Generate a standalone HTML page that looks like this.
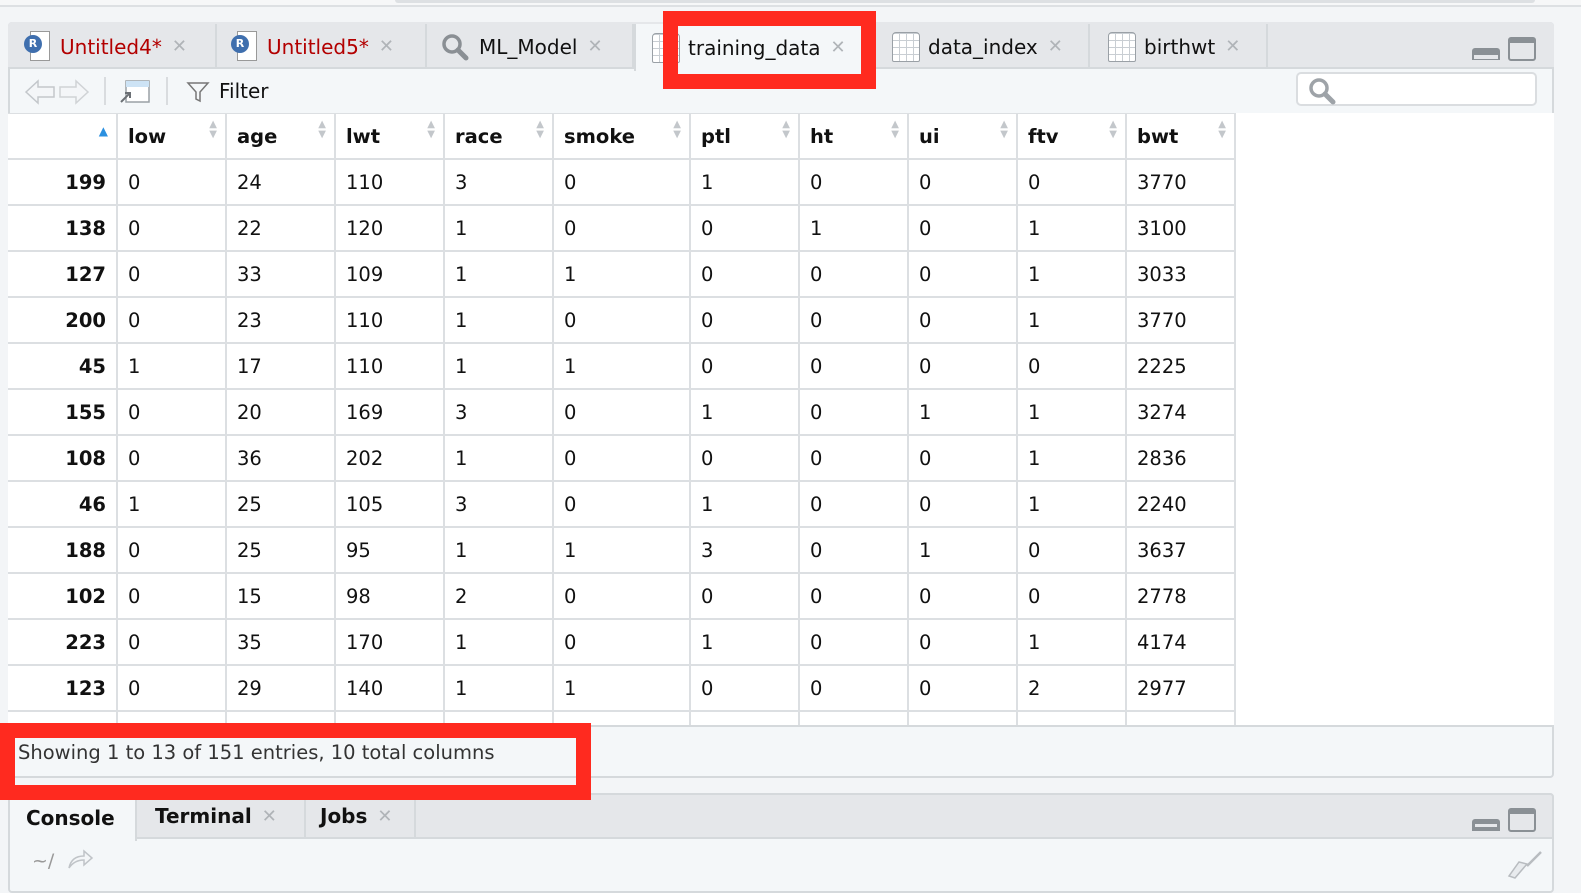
<!DOCTYPE html>
<html><head><meta charset="utf-8"><style>
*{box-sizing:border-box;margin:0;padding:0}
body{width:1581px;height:881px;overflow:hidden;background:#f3f5f7;font-family:"DejaVu Sans","Liberation Sans",sans-serif;position:relative;color:#111}
.abs{position:absolute}
.pane{left:8px;top:22px;width:1546px;height:756px;border:2px solid #d5d9dc;border-radius:4px;background:#f4f7f9}
.tabbar{left:8px;top:22px;width:1546px;height:47px;background:#e5e7ea;border-bottom:2px solid #d5d9dc;border-radius:4px 4px 0 0}
.tab{top:24px;height:45px;border-right:2px solid #d5d9dc;font-size:20px;display:flex;align-items:center;padding-left:14px;white-space:nowrap}
.x{color:#b0b4b8;font-size:18px;margin-left:10px;font-weight:bold}
.red{color:#b30000}
.grid{width:28px;height:30px;border:1.5px solid #9aa0a6;border-radius:4px 4px 2px 2px;background:repeating-linear-gradient(90deg,transparent 0 6px,#c9ced3 6px 7px),repeating-linear-gradient(0deg,#fff 0 6px,#c9ced3 6px 7px);margin-right:8px}
.rdoc{width:26px;height:32px;position:relative;margin-right:10px}
.rdoc .pg{position:absolute;left:6px;top:0;width:20px;height:30px;border:1.5px solid #999;background:#fff}
.rdoc .c{position:absolute;left:0;top:4px;width:18px;height:18px;border-radius:50%;background:#3f6fae;color:#fff;font-size:11px;font-weight:bold;text-align:center;line-height:18px}
table{border-collapse:collapse;font-size:19.5px;table-layout:fixed}
td,th{border:2px solid #dcdfe2;height:46px;padding:0 10px;text-align:left;white-space:nowrap;overflow:hidden}
th{font-weight:bold;position:relative;background:#fff}
td{background:#fff}
td.n{text-align:right;font-weight:bold;background:#fff}
th .s{position:absolute;right:8px;top:6px;color:#c3c7cb;font-size:10px;line-height:10px}
.rb{border:15px solid #ff2a1f}
</style></head><body>
<div class="abs" style="left:0;top:0;width:1581px;height:7px;background:#f6f7f8;border-bottom:2px solid #dde0e3"></div>
<div class="abs" style="left:395px;top:0;width:1140px;height:3px;background:#dde0e3;border-radius:0 0 3px 3px"></div>
<div class="abs pane"></div>
<div class="abs tabbar"></div>
<div class="abs tab" style="left:10px;width:207px"><div class="rdoc"><div class="pg"></div><div class="c">R</div></div><span class="red">Untitled4*</span><span class="x">✕</span></div>
<div class="abs tab" style="left:217px;width:210px"><div class="rdoc"><div class="pg"></div><div class="c">R</div></div><span class="red">Untitled5*</span><span class="x">✕</span></div>
<div class="abs tab" style="left:427px;width:207px"><svg width="28" height="28" viewBox="0 0 28 28" style="margin-right:10px"><circle cx="11" cy="11" r="8" fill="none" stroke="#8a8f94" stroke-width="3.5"/><path d="M17 17l8 8" stroke="#8a8f94" stroke-width="5" stroke-linecap="round"/></svg>ML_Model<span class="x">✕</span></div>
<div class="abs tab" style="left:634px;width:232px;background:#f4f7f9;height:47px;border-left:2px solid #d5d9dc;padding-left:16px"><div class="grid"></div>training_data<span class="x">✕</span></div>
<div class="abs tab" style="left:878px;width:212px;padding-left:14px"><div class="grid"></div>data_index<span class="x">✕</span></div>
<div class="abs tab" style="left:1090px;width:178px;padding-left:18px"><div class="grid"></div>birthwt<span class="x">✕</span></div>
<div class="abs" style="left:1472px;top:48px;width:28px;height:12px;background:#8a9095;border-radius:3px 3px 0 0;border:2px solid #8a9095;border-bottom:0"><div style="background:#e5e7ea;height:4px;margin-top:5px"></div></div>
<div class="abs" style="left:1508px;top:37px;width:28px;height:24px;border:2.5px solid #8a9095;border-top:6px solid #8a9095;border-radius:3px"></div>
<svg class="abs" style="left:24px;top:78px" width="70" height="28"><path d="M2 14 L14 3 V9 H30 V19 H14 V25Z" fill="#f4f6f8" stroke="#c3c7cb" stroke-width="1.5"/><path d="M64 14 L52 3 V9 H36 V19 H52 V25Z" fill="#f4f6f8" stroke="#d0d3d6" stroke-width="1.5"/></svg>
<div class="abs" style="left:104px;top:77px;width:2px;height:28px;background:#d9dcdf"></div>
<svg class="abs" style="left:118px;top:78px" width="34" height="28"><rect x="8" y="3" width="23" height="21" fill="#fff" stroke="#9aa0a6" stroke-width="1.5"/><rect x="8" y="3" width="23" height="6" fill="#cde3f5"/><path d="M3 24 L12 15 M7 15 H12 V20" stroke="#6b7075" stroke-width="2" fill="none"/></svg>
<div class="abs" style="left:166px;top:77px;width:2px;height:28px;background:#d9dcdf"></div>
<svg class="abs" style="left:186px;top:80px" width="24" height="24"><path d="M2 3 H22 L14 12 V21 L10 19 V12Z" fill="none" stroke="#777" stroke-width="1.5"/></svg>
<div class="abs" style="left:219px;top:79px;font-size:20px">Filter</div>
<div class="abs" style="left:1296px;top:72px;width:241px;height:34px;background:#fff;border:2px solid #dadde0;border-radius:5px"></div>
<svg class="abs" style="left:1308px;top:77px" width="30" height="28"><circle cx="11" cy="11" r="8" fill="none" stroke="#9ea3a8" stroke-width="3.5"/><path d="M17 17l8 8" stroke="#9ea3a8" stroke-width="5" stroke-linecap="round"/></svg>
<div class="abs" style="left:8px;top:113px;width:1546px;height:614px;background:#fff;overflow:hidden;border-bottom:2px solid #d5d9dc">
<table style="margin-left:-2px;margin-top:-1px;width:1228px">
<colgroup><col style="width:110px"><col style="width:109px"><col style="width:109px"><col style="width:109px"><col style="width:109px"><col style="width:137px"><col style="width:109px"><col style="width:109px"><col style="width:109px"><col style="width:109px"><col style="width:109px"></colgroup>
<tr><th><span style="position:absolute;right:8px;top:10px;color:#2b90e0;font-size:12px">▲</span></th><th>low<span class="s">▲<br>▼</span></th><th>age<span class="s">▲<br>▼</span></th><th>lwt<span class="s">▲<br>▼</span></th><th>race<span class="s">▲<br>▼</span></th><th>smoke<span class="s">▲<br>▼</span></th><th>ptl<span class="s">▲<br>▼</span></th><th>ht<span class="s">▲<br>▼</span></th><th>ui<span class="s">▲<br>▼</span></th><th>ftv<span class="s">▲<br>▼</span></th><th>bwt<span class="s">▲<br>▼</span></th></tr>
<tr><td class="n">199</td><td>0</td><td>24</td><td>110</td><td>3</td><td>0</td><td>1</td><td>0</td><td>0</td><td>0</td><td>3770</td></tr>
<tr><td class="n">138</td><td>0</td><td>22</td><td>120</td><td>1</td><td>0</td><td>0</td><td>1</td><td>0</td><td>1</td><td>3100</td></tr>
<tr><td class="n">127</td><td>0</td><td>33</td><td>109</td><td>1</td><td>1</td><td>0</td><td>0</td><td>0</td><td>1</td><td>3033</td></tr>
<tr><td class="n">200</td><td>0</td><td>23</td><td>110</td><td>1</td><td>0</td><td>0</td><td>0</td><td>0</td><td>1</td><td>3770</td></tr>
<tr><td class="n">45</td><td>1</td><td>17</td><td>110</td><td>1</td><td>1</td><td>0</td><td>0</td><td>0</td><td>0</td><td>2225</td></tr>
<tr><td class="n">155</td><td>0</td><td>20</td><td>169</td><td>3</td><td>0</td><td>1</td><td>0</td><td>1</td><td>1</td><td>3274</td></tr>
<tr><td class="n">108</td><td>0</td><td>36</td><td>202</td><td>1</td><td>0</td><td>0</td><td>0</td><td>0</td><td>1</td><td>2836</td></tr>
<tr><td class="n">46</td><td>1</td><td>25</td><td>105</td><td>3</td><td>0</td><td>1</td><td>0</td><td>0</td><td>1</td><td>2240</td></tr>
<tr><td class="n">188</td><td>0</td><td>25</td><td>95</td><td>1</td><td>1</td><td>3</td><td>0</td><td>1</td><td>0</td><td>3637</td></tr>
<tr><td class="n">102</td><td>0</td><td>15</td><td>98</td><td>2</td><td>0</td><td>0</td><td>0</td><td>0</td><td>0</td><td>2778</td></tr>
<tr><td class="n">223</td><td>0</td><td>35</td><td>170</td><td>1</td><td>0</td><td>1</td><td>0</td><td>0</td><td>1</td><td>4174</td></tr>
<tr><td class="n">123</td><td>0</td><td>29</td><td>140</td><td>1</td><td>1</td><td>0</td><td>0</td><td>0</td><td>2</td><td>2977</td></tr>
<tr><td class="n">225</td><td>0</td><td>24</td><td>116</td><td>1</td><td>0</td><td>0</td><td>0</td><td>0</td><td>1</td><td>4593</td></tr>
</table></div>
<div class="abs" style="left:18px;top:741px;font-size:19.5px;color:#333">Showing 1 to 13 of 151 entries, 10 total columns</div>
<div class="abs" style="left:8px;top:793px;width:1546px;height:100px;background:#f4f7f9;border:2px solid #d5d9dc;border-radius:4px"></div>
<div class="abs" style="left:8px;top:793px;width:1546px;height:46px;background:#e5e7ea;border:2px solid #d5d9dc;border-radius:4px 4px 0 0"></div>
<div class="abs tab" style="left:10px;top:795px;width:127px;height:46px;background:#f4f7f9;font-weight:bold;padding-left:16px">Console</div>
<div class="abs tab" style="left:137px;top:795px;width:169px;height:42px;font-weight:bold;padding-left:18px">Terminal<span class="x">✕</span></div>
<div class="abs tab" style="left:306px;top:795px;width:110px;height:42px;font-weight:bold;padding-left:14px">Jobs<span class="x">✕</span></div>
<div class="abs" style="left:1472px;top:819px;width:28px;height:12px;background:#8a9095;border-radius:3px 3px 0 0"><div style="background:#e5e7ea;height:3px;margin:5px 3px 0"></div></div>
<div class="abs" style="left:1508px;top:808px;width:28px;height:24px;border:2.5px solid #8a9095;border-top:6px solid #8a9095;border-radius:3px"></div>
<div class="abs" style="left:32px;top:850px;font-size:19px;color:#999">~/</div>
<svg class="abs" style="left:66px;top:848px" width="28" height="22"><path d="M3 20 C5 10 12 8 18 8 V3 L26 10 L18 17 V12 C12 12 7 14 3 20Z" fill="#f4f6f8" stroke="#c0c4c8" stroke-width="1.5"/></svg>
<svg class="abs" style="left:1505px;top:850px" width="40" height="31"><path d="M36 2 L22 16" stroke="#b8bcc0" stroke-width="2.5"/><path d="M22 14 L10 28 L4 26 L14 12Z" fill="#e8ebee" stroke="#b8bcc0" stroke-width="1.5"/></svg>
<div class="abs rb" style="left:663px;top:11px;width:213px;height:78px"></div>
<div class="abs rb" style="left:0;top:723px;width:591px;height:77px"></div>
</body></html>
